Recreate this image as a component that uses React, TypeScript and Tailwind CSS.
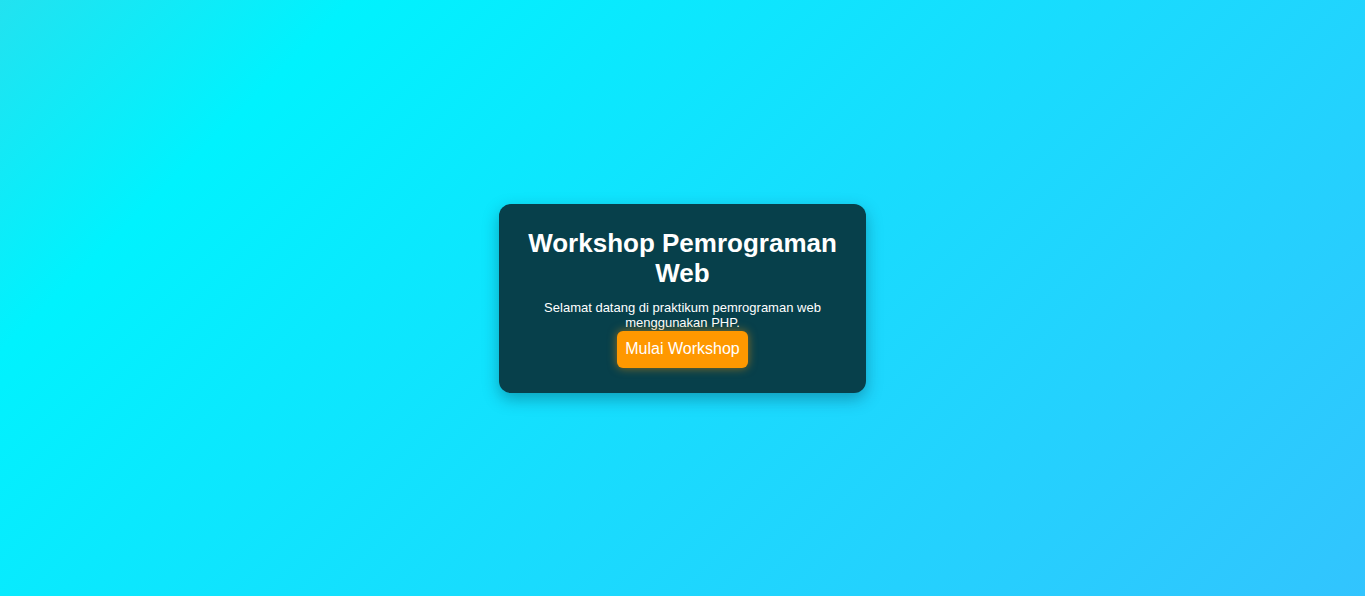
import React from 'react';

const App: React.FC = () => {
  return (
    <div className="flex h-[596px] w-full items-center justify-center bg-[linear-gradient(135deg,#22e2f0_0%,#00f2fe_18%,#18dcfe_55%,#32c4fe_100%)] font-['Liberation_Sans',Arial,sans-serif]">
      <div className="flex w-[367px] flex-col items-center rounded-xl bg-[#07404b] px-6 pt-6 pb-[25px] text-center shadow-[0_6px_16px_rgba(0,40,60,0.35)]">
        <h1 className="text-[26px] leading-[30px] font-bold text-white">Workshop Pemrograman Web</h1>
        <p className="mt-3 text-[13px] leading-[15px] text-white">
          Selamat datang di praktikum pemrograman web menggunakan PHP.
        </p>
        <button className="mt-px h-[37px] rounded-md bg-[#ff9800] px-2 text-base text-white shadow-[0_0_10px_rgba(255,152,0,0.55)]">
          Mulai Workshop
        </button>
      </div>
    </div>
  );
};

export default App;
